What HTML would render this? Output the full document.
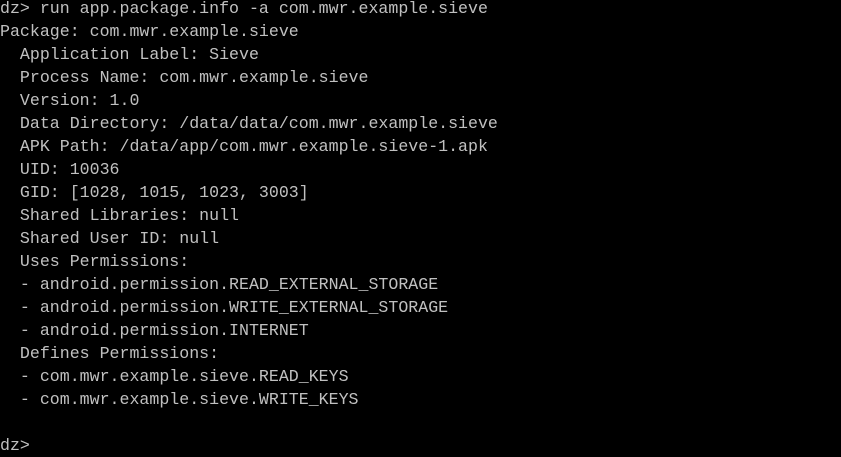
<html><head><style>
body{margin:0;background:#000;width:841px;height:454px;overflow:hidden}
pre{margin:0;position:absolute;top:-3px;left:0;font-family:"Liberation Mono","Noto Sans CJK SC",monospace;font-size:16.6px;line-height:23px;color:#c0c0c0}
</style></head><body><pre>dz&gt; run app.package.info -a com.mwr.example.sieve
Package: com.mwr.example.sieve
  Application Label: Sieve
  Process Name: com.mwr.example.sieve
  Version: 1.0
  Data Directory: /data/data/com.mwr.example.sieve
  APK Path: /data/app/com.mwr.example.sieve-1.apk
  UID: 10036
  GID: [1028, 1015, 1023, 3003]
  Shared Libraries: null
  Shared User ID: null
  Uses Permissions:
  - android.permission.READ_EXTERNAL_STORAGE
  - android.permission.WRITE_EXTERNAL_STORAGE
  - android.permission.INTERNET
  Defines Permissions:
  - com.mwr.example.sieve.READ_KEYS
  - com.mwr.example.sieve.WRITE_KEYS

dz&gt;</pre></body></html>
